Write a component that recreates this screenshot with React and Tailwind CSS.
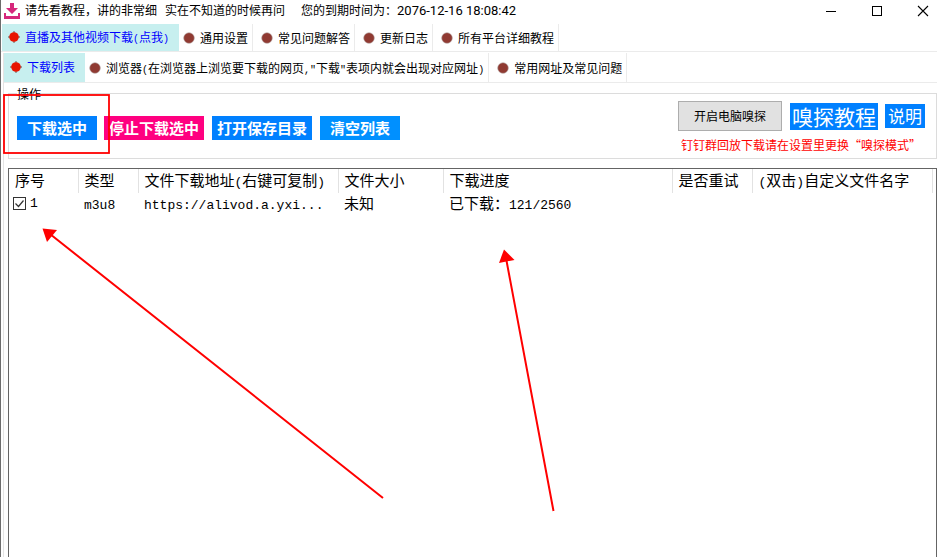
import React, { useState } from 'react';

// the table columns, last one takes the rest
const COLUMNS = [
  { key: 'index', label: '序号', width: 'w-[69px]' },
  { key: 'type', label: '类型', width: 'w-[60px]' },
  { key: 'url', label: <>文件下载地址<Half>(</Half>右键可复制<Half>)</Half></>, width: 'w-[200px]' },
  { key: 'size', label: '文件大小', width: 'w-[105px]' },
  { key: 'progress', label: '下载进度', width: 'w-[229px]' },
  { key: 'retry', label: '是否重试', width: 'w-[80px]' },
  { key: 'name', label: <><Half>(</Half>双击<Half>)</Half>自定义文件名字</>, width: '' },
];

const MAIN_TABS = [
  <>直播及其他视频下载<Half small>(</Half>点我<Half small>)</Half></>,
  '通用设置',
  '常见问题解答',
  '更新日志',
  '所有平台详细教程',
];

const SUB_TABS = [
  '下载列表',
  <>
    浏览器<Half small>(</Half>在浏览器上浏览要下载的网页<Half small>,"</Half>下载<Half small>"</Half>
    表项内就会出现对应网址<Half small>)</Half>
  </>,
  '常用网址及常见问题',
];

// half-width characters, half as wide as the Chinese ones around them
function Half({ small, children }) {
  return (
    <span className={`leading-none font-['Liberation_Mono',monospace] ${small ? 'text-[10px]' : 'text-[13px]'}`}>
      {children}
    </span>
  );
}

function TabDot({ active }) {
  if (active) {
    return (
      <svg className="w-3 h-3 shrink-0" viewBox="0 0 12 12">
        <path d="M6 0v12M0 6h12" stroke="#7a8583" strokeWidth="1.4" />
        <circle cx="6" cy="6" r="4.8" fill="#e81500" />
      </svg>
    );
  }
  return (
    <svg className="w-3 h-3 shrink-0" viewBox="0 0 12 12">
      <circle cx="6" cy="6" r="5.3" fill="#903a32" stroke="#b0a09e" strokeWidth="0.6" />
    </svg>
  );
}

function TabBar({ tabs, className }) {
  const [selected, setSelected] = useState(0);

  return (
    <div role="tablist" className={`flex gap-0.5 border-b border-[#ebebeb] ${className}`}>
      {tabs.map((tab, i) => (
        <button
          key={i}
          role="tab"
          aria-selected={i === selected}
          onClick={() => setSelected(i)}
          className={`flex items-center gap-[5px] pl-1.5 text-xs whitespace-nowrap ${
            i === selected
              ? 'bg-[#c7efef] text-[#0000ff] pr-2.5 -mr-1 pb-0.5'
              : 'pr-1 border-r border-[#ebebeb]'
          }`}
        >
          <TabDot active={i === selected} />
          <span>{tab}</span>
        </button>
      ))}
    </div>
  );
}

function TitleBar() {
  return (
    <header className="flex items-center h-6 pl-[3px] pb-0.5 text-xs">
      <svg className="w-4 h-4 mr-[5px] shrink-0" viewBox="0 0 16 16" fill="#d6277c">
        <path d="M6 0h4v5h4L8 11 2 5h4z" />
        <path d="M0 10h2v3h12v-3h2v6H0z" />
      </svg>
      <h1 className="flex whitespace-nowrap">
        <span className="mr-2">请先看教程，讲的非常细</span>
        <span className="mr-4">实在不知道的时候再问</span>
        <span>您的到期时间为：</span>
        <span className="font-['Roboto',sans-serif] text-[13px]">2076-12-16 18:08:42</span>
      </h1>
      <div className="flex ml-auto">
        <button aria-label="最小化" className="w-[46px] h-5 flex items-center justify-center">
          <svg className="w-3 h-3" viewBox="0 0 12 12" shapeRendering="crispEdges">
            <path d="M1 6.5h10" stroke="#000" />
          </svg>
        </button>
        <button aria-label="最大化" className="w-[46px] h-5 flex items-center justify-center">
          <svg className="w-3 h-3" viewBox="0 0 12 12" fill="none" shapeRendering="crispEdges">
            <rect x="1.5" y="1.5" width="9" height="9" stroke="#000" />
          </svg>
        </button>
        <button aria-label="关闭" className="w-[46px] h-5 -mr-[9px] flex items-center justify-center">
          <svg className="w-3 h-3" viewBox="0 0 12 12">
            <path d="M1 1l10 10M11 1L1 11" stroke="#000" strokeWidth="1.1" />
          </svg>
        </button>
      </div>
    </header>
  );
}

function Actions() {
  return (
    <fieldset className="relative h-[66px] ml-1 border border-[#dcdcdc] flex justify-between">
      <legend className="absolute left-2 -top-2 h-4 text-xs leading-4 bg-white">操作</legend>
      <div className="flex items-start pl-2 pt-[22px] text-[15px] font-bold text-white whitespace-nowrap">
        <button className="w-20 h-6 mr-[7px] bg-[#0080ff]">下载选中</button>
        <button className="w-[100px] h-6 mr-2 bg-[#ff0080]">停止下载选中</button>
        <button className="w-[100px] h-6 mr-2 bg-[#0080ff]">打开保存目录</button>
        <button className="w-20 h-6 bg-[#0090ff]">清空列表</button>
      </div>
      <div className="pt-[7px] pr-[11px] whitespace-nowrap">
        <div className="flex items-center">
          <button className="w-[104px] h-[30px] mr-2 text-xs bg-[#e1e1e1] border border-[#adadad]">
            开启电脑嗅探
          </button>
          <a href="#tutorial" className="h-[27px] w-[88px] mr-[7px] text-center text-[21px] leading-[27px] text-white bg-[#0080ff]">
            嗅探教程
          </a>
          <a href="#help" className="h-6 w-10 text-center text-[17px] leading-6 text-white bg-[#0080ff]">
            说明
          </a>
        </div>
        <p className="mt-1.5 pl-[3px] text-xs text-[#ff0000]">钉钉群回放下载请在设置里更换“嗅探模式”</p>
      </div>
    </fieldset>
  );
}

function DownloadTable() {
  const [checked, setChecked] = useState(true);

  return (
    <div className="flex-1 mt-[9px] ml-1 pr-[3px] border border-b-0 border-[#646464]">
      <table className="w-full table-fixed text-[15px] leading-5 text-left whitespace-nowrap">
        <thead>
          <tr className="h-6">
            {COLUMNS.map((col) => (
              <th key={col.key} className={`${col.width} p-0 pl-1.5 pb-0.5 font-normal border-r border-[#e2e2e2]`}>
                {col.label}
              </th>
            ))}
          </tr>
        </thead>
        <tbody>
          <tr className="h-5">
            <td className="p-0 pl-1">
              <label className="relative flex items-center gap-1">
                <input
                  type="checkbox"
                  checked={checked}
                  onChange={(e) => setChecked(e.target.checked)}
                  className="appearance-none w-[13px] h-[13px] bg-white border border-[#333]"
                />
                {checked && (
                  <svg className="absolute left-0 w-[13px] h-[13px] pointer-events-none" viewBox="0 0 13 13" fill="none">
                    <path d="M2.5 6.5l3 3 5-6" stroke="#333" strokeWidth="1.2" />
                  </svg>
                )}
                <Half>1</Half>
              </label>
            </td>
            <td className="p-0 pl-1.5"><Half>m3u8</Half></td>
            <td className="p-0 pl-1.5"><Half>https://alivod.a.yxi...</Half></td>
            <td className="p-0 pl-1.5">未知</td>
            <td className="p-0 pl-1.5">已下载：<Half>121/2560</Half></td>
            <td className="p-0"></td>
            <td className="p-0"></td>
          </tr>
        </tbody>
      </table>
    </div>
  );
}

// red box and arrows drawn over the window
function Annotations() {
  return (
    <svg
      className="absolute -left-px top-0 w-[600px] h-[540px] pointer-events-none"
      viewBox="0 0 600 540"
      fill="none"
      stroke="#ff0000"
      strokeWidth="2"
    >
      <rect x="4" y="95" width="105" height="58" strokeWidth="1.8" />
      <path d="M383 498L50 234M553.500 511L506 258" />
      <path d="M42.500 228.500L57 230L47 242z" fill="#ff0000" stroke="none" />
      <path d="M504 249.500L514.500 260L499 263z" fill="#ff0000" stroke="none" />
    </svg>
  );
}

const App = () => {
  return (
    <div
      lang="zh-CN"
      className="relative min-h-screen flex flex-col overflow-hidden bg-white text-black border-l border-[#6c6c6c] font-['Noto_Sans_CJK_SC',sans-serif]"
    >
      <TitleBar />
      <TabBar tabs={MAIN_TABS} className="h-7 pl-px" />
      <main className="flex-1 flex flex-col mt-px ml-0.5 border-l border-[#e4e4e4]">
        <TabBar tabs={SUB_TABS} className="h-[30px] mb-2.5" />
        <Actions />
        <DownloadTable />
      </main>
      <Annotations />
    </div>
  );
};

export default App;
